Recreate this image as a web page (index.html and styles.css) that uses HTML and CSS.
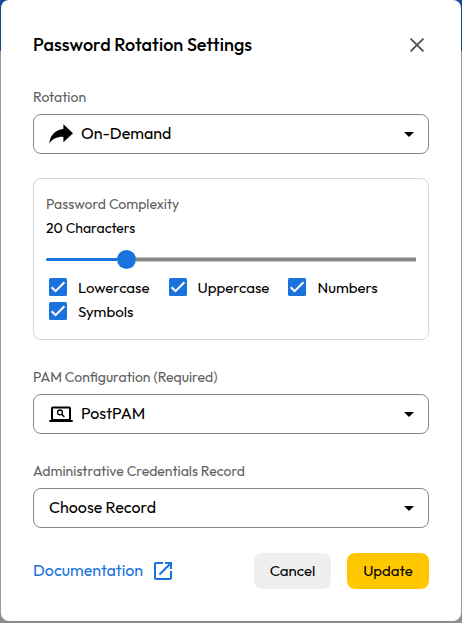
FILE: index.html
```html
<!DOCTYPE html>
<html lang="en">
<head>
<meta charset="utf-8">
<title>Password Rotation Settings</title>
<link rel="stylesheet" href="styles.css">
</head>
<body>
<main class="dialog">
  <header class="head">
    <h1 class="title">Password Rotation Settings</h1>
    <svg class="close" width="16" height="16" viewBox="0 0 16 16"><path d="M1.600 1.600 14.400 14.400M14.400 1.600 1.600 14.400" fill="none" stroke="#555" stroke-width="2"/></svg>
  </header>

  <div class="label">Rotation</div>
  <div class="select">
    <svg class="lead" width="24" height="20" viewBox="0 0 24 20"><path d="M14.400.2 24 9.300l-9.600 8.900v-5.300C8.500 12.600 4 14.600.2 19.400 1.300 11.500 6 5.900 14.400 5.100z"/></svg>
    <span class="value">On-Demand</span>
    <svg class="caret" width="10" height="5" viewBox="0 0 10 5"><path d="M0 0h10L5 5z"/></svg>
  </div>

  <section class="complexity">
    <div class="label">Password Complexity</div>
    <div class="count">20 Characters</div>
    <div class="slider"><i class="done"></i><i class="thumb"></i><i class="rest"></i></div>
    <div class="checks">
      <div class="check"><svg width="18" height="18" viewBox="0 0 18 18"><rect width="18" height="18" rx="1.5" fill="#1a73dc"/><path d="M2.600 9.200 6.600 13.100 15.400 4.300" fill="none" stroke="#fff" stroke-width="2"/></svg><span>Lowercase</span></div>
      <div class="check upper"><svg width="18" height="18" viewBox="0 0 18 18"><rect width="18" height="18" rx="1.5" fill="#1a73dc"/><path d="M2.600 9.200 6.600 13.100 15.400 4.300" fill="none" stroke="#fff" stroke-width="2"/></svg><span>Uppercase</span></div>
      <div class="check numbers"><svg width="18" height="18" viewBox="0 0 18 18"><rect width="18" height="18" rx="1.5" fill="#1a73dc"/><path d="M2.600 9.200 6.600 13.100 15.400 4.300" fill="none" stroke="#fff" stroke-width="2"/></svg><span>Numbers</span></div>
      <div class="check"><svg width="18" height="18" viewBox="0 0 18 18"><rect width="18" height="18" rx="1.5" fill="#1a73dc"/><path d="M2.600 9.200 6.600 13.100 15.400 4.300" fill="none" stroke="#fff" stroke-width="2"/></svg><span>Symbols</span></div>
    </div>
  </section>

  <div class="label">PAM Configuration (Required)</div>
  <div class="select pam">
    <svg class="lead" width="24" height="20" viewBox="0 0 24 20"><path d="M.3 16h23.400v2H.3z"/><rect x="3" y="3.500" width="18" height="12.500" rx="1" fill="none" stroke="#000" stroke-width="2"/><circle cx="11" cy="8.400" r="2.400" fill="none" stroke="#000" stroke-width="1.300"/><path d="m12.700 10.200 2.700 2.700" stroke="#000" stroke-width="1.400"/></svg>
    <span class="value">PostPAM</span>
    <svg class="caret" width="10" height="5" viewBox="0 0 10 5"><path d="M0 0h10L5 5z"/></svg>
  </div>

  <div class="label">Administrative Credentials Record</div>
  <div class="select record">
    <span class="value">Choose Record</span>
    <svg class="caret" width="10" height="5" viewBox="0 0 10 5"><path d="M0 0h10L5 5z"/></svg>
  </div>

  <footer class="foot">
    <a class="doc"><span class="doc-text">Documentation</span><svg width="24" height="24" viewBox="0 0 24 24"><path fill="#1a73dc" d="M19 19H5V5h7V3H5c-1.110 0-2 .9-2 2v14c0 1.100.890 2 2 2h14c1.100 0 2-.9 2-2v-7h-2v7zM14 3v2h3.590l-9.830 9.830 1.410 1.410L19 6.410V10h2V3h-7z"/></svg></a>
    <button class="btn cancel">Cancel</button>
    <button class="btn update">Update</button>
  </footer>
</main>
</body>
</html>
```
FILE: styles.css
```css
* { box-sizing: border-box; }

body {
  margin: 0;
  height: 623px;
  padding: 0 1px 2px;
  overflow: hidden;
  background: linear-gradient(#104c94 0 51px, #999 51px 115px, #858585 115px 116px, #999 116px 615px, #8d8d8d 615px);
  font-family: Outfit, Lato, "Liberation Sans", sans-serif;
  color: #000;
}

.dialog {
  height: 621px;
  padding: 32px;
  background: #fff;
  border-radius: 8px;
}

.head {
  display: flex;
  align-items: center;
  justify-content: space-between;
  height: 26px;
  margin-bottom: 30px;
}

.title { margin: 0; font-size: 18px; line-height: 26px; font-weight: 500; letter-spacing: 0.035px; }
.close { margin-right: 4px; }

.label { height: 18px; margin-bottom: 8px; font-size: 14px; line-height: 18px; color: #606060; white-space: nowrap; }

.select {
  display: flex;
  align-items: center;
  height: 40px;
  margin-bottom: 24px;
  padding: 0 14px 0 15px;
  border: 1px solid #858585;
  border-radius: 8px;
  font-size: 16px;
  line-height: 20px;
}
.lead { margin-right: 8px; }
.value { padding-bottom: 2px; white-space: nowrap; }
.caret { margin-left: auto; }
.pam { margin-bottom: 28px; }
.record { margin-bottom: 25px; }

.complexity {
  height: 162px;
  margin-bottom: 28px;
  padding: 16px 12px 0;
  border: 1px solid #d5d5d5;
  border-radius: 8px;
}
.count { height: 18px; font-size: 14px; line-height: 18px; margin-top: -2px; }

.slider { display: flex; align-items: center; height: 19px; margin-top: 13px; }
.done { width: 71px; height: 3px; border-radius: 2px 0 0 2px; background: #1a73dc; }
.thumb { width: 19px; height: 19px; border-radius: 50%; background: #1a73dc; }
.rest { flex: 1; height: 5px; background: linear-gradient(#c4c4c4 0 1px, #858585 1px 4px, #c4c4c4 4px); }

.checks { display: grid; grid-template-columns: 120px 119px 120px; grid-auto-rows: 24px; margin: 6px 0 0 3px; }
.check { display: flex; align-items: center; gap: 11px; font-size: 15px; white-space: nowrap; }
.upper { gap: 10.5px; }
.numbers { gap: 11.5px; }

.foot { display: flex; align-items: center; height: 36px; }
.doc { display: flex; align-items: center; gap: 8px; margin-right: auto; font-size: 16px; color: #1a73dc; }
.doc-text { padding-bottom: 2px; }
.btn { height: 36px; padding: 0; border: 0; border-radius: 8px; font: 400 15px/20px Outfit, Lato, "Liberation Sans", sans-serif; color: #000; }
.cancel { width: 77px; margin-right: 16px; background: #efefef; }
.update { width: 82px; background: #ffc700; }
```
